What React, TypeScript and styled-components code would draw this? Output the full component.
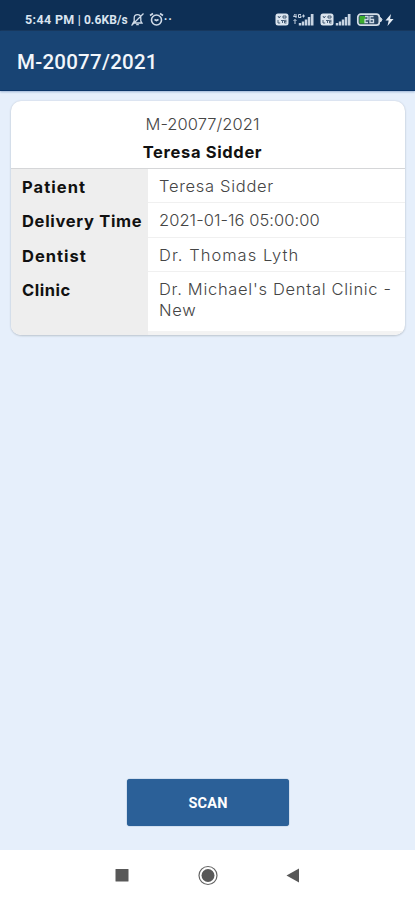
import React from "react";
import styled, { createGlobalStyle } from "styled-components";

const GlobalStyle = createGlobalStyle`
  * { box-sizing: border-box; }
  body { margin: 0; background: #e6effb; }
`;

const Screen = styled.div`
  display: flex;
  flex-direction: column;
  width: 415px;
  height: 900px;
  overflow: hidden;
  background: #e6effb;
  font-family: Inter, sans-serif;
`;

const StatusBar = styled.div`
  display: flex;
  align-items: center;
  height: 31px;
  padding: 8px 20px 0 25px;
  background: #0d2f55;
  color: #d9e4f0;
`;

const StatusText = styled.span<{ $size: number; $track: number }>`
  font: 700 ${(p) => p.$size}px/16px Roboto, sans-serif;
  letter-spacing: ${(p) => p.$track}px;
  white-space: pre;
`;

const StatusIcons = styled.div`
  display: flex;
  align-items: center;
  margin-left: auto;
`;

const AppBar = styled.header`
  display: flex;
  align-items: center;
  height: 60px;
  padding: 2px 17px 0;
  background: #184474;
  border-bottom: 1px solid #0d3669;
  box-shadow: 0 1px 2px #9db5d5;
`;

const Title = styled.h1`
  margin: 0;
  color: #f2f6fb;
  font: 500 20.5px/26px Roboto, sans-serif;
  letter-spacing: 0.25px;
`;

const Content = styled.main`
  display: flex;
  flex: 1;
  flex-direction: column;
  align-items: center;
  justify-content: space-between;
  padding: 10px 10px 24px 11px;
`;

const Card = styled.section`
  width: 394px;
  overflow: hidden;
  border-radius: 10px;
  background: #fff;
  box-shadow: 0 0 2px #c5cedb, 0 1px 2px #bcc5cf;
`;

const CardHeader = styled.div`
  display: flex;
  flex-direction: column;
  align-items: center;
  height: 68px;
  padding: 9px 11px 0 0;
  border-bottom: 1px solid #d5d6d8;
`;

const Text = styled.span<{ $bold?: boolean; $track: number }>`
  display: block;
  color: ${(p) => (p.$bold ? "#111" : "#454545")};
  font-size: 16.5px;
  font-weight: ${(p) => (p.$bold ? 700 : 300)};
  line-height: 28px;
  letter-spacing: ${(p) => p.$track}px;
  white-space: pre;
`;

const Row = styled.div<{ $last?: boolean }>`
  display: grid;
  grid-template-columns: 137px 1fr;
  height: ${(p) => (p.$last ? 63 : 34.33)}px;
`;

const LabelCell = styled.div`
  padding: 4px 0 0 11px;
  background: #eee;
`;

const ValueCell = styled.div<{ $last?: boolean }>`
  padding: ${(p) => (p.$last ? 7 : 3)}px 0 0 11px;
  border-bottom: ${(p) => (p.$last ? "4px solid #f3f3f3" : "1px solid #f0f0f0")};

  ${Text} {
    line-height: ${(p) => (p.$last ? 21 : 28)}px;
  }
`;

const ScanButton = styled.button`
  width: 162px;
  height: 47px;
  padding: 3px 0 0;
  border: 0;
  border-radius: 3px;
  background: #2b6098;
  box-shadow: 0 0 1px #265784;
  color: #fff;
  font: 700 14.5px/20px Roboto, sans-serif;
  letter-spacing: 0.2px;
`;

const NavBar = styled.nav`
  height: 50px;
  background: #fff;

  svg { display: block; }
`;

const MutedBell = () => (
  <svg width="15" height="15" viewBox="0 0 15 15" fill="none" stroke="#d0dbe8" strokeWidth="1.3">
    <path d="M3 11h9l-1.2-2V6A3.3 3.3 0 0 0 4.2 6v3zM6.2 12.7h2.6M1.5 13.5l12-12" />
  </svg>
);

const AlarmClock = () => (
  <svg width="15" height="15" viewBox="0 0 15 15" fill="none" stroke="#d0dbe8" strokeWidth="1.6">
    <circle cx="7.5" cy="8" r="5" />
    <path d="M1 3.5 4 1.5M14 3.5 11 1.5M5.5 7.5l2 1 2-1" />
  </svg>
);

const VolteBadge = () => (
  <svg width="14" height="13" viewBox="0 0 14 13">
    <rect x=".5" y=".5" width="13" height="12" rx="2.5" fill="#dbe5ef" />
    <path d="M3 3l1.2 2L5.5 3M8 3h3v2H8zM3 7v3h2.2M6 7.5h3M7.5 7.5V10M11.5 7.3h-2V10h2M9.5 8.6h2" fill="none" stroke="#38506c" strokeWidth=".9" />
  </svg>
);

const Signal = ({ network }: { network?: boolean }) => (
  <svg width={network ? 22 : 17} height="13" viewBox={network ? "-5 0 22 13" : "0 0 17 13"} fill="#c6d3e2">
    <path d="M.8 10h2.4v2.5H.8zM3.8 8.5h2.4v4H3.8zM6.8 6.5h2.4v6H6.8zM9.8 4h2.4v8.5H9.8zM12.8 1h2.7v11.5h-2.7z" />
    {network && (
      <path d="M-3 1l-1.500 2.500h3M-2 1v4M3 1.500H.5v3H3V3H2M4 3h3M5.500 1.500v3M-3 11V6.500l-1.500 1.500M-3 6.500l1.500 1.500" fill="none" stroke="#c6d3e2" />
    )}
  </svg>
);

const Battery = () => (
  <svg width="39" height="14" viewBox="0 0 39 14">
    <rect x="1.8" y="1.2" width="21.5" height="11" rx="3" fill="#284563" stroke="#d4dee8" strokeWidth="1.7" />
    <rect x="3.5" y="3" width="6" height="7.5" fill="#3bad2e" />
    <path d="M24.5 4.5q3 2 0 4.5z" fill="#d4dee8" stroke="#d4dee8" />
    <path d="M9 3.5h3v3H9v3h3M17.5 3.5H14v6h3.5v-3H14" fill="none" stroke="#cbd8e4" strokeWidth="1.3" />
    <path d="M35 1 29.5 7.5h3.2l-1.2 5.5 6-7h-3.400z" fill="#e6edf4" />
  </svg>
);

const StatusGap = styled.span<{ $w: number }>`
  width: ${(p) => p.$w}px;
`;

const rows = [
  { label: "Patient", labelTrack: 1.05, value: "Teresa Sidder", valueTrack: 0.7 },
  { label: "Delivery Time", labelTrack: 0.7, value: "2021-01-16 05:00:00", valueTrack: 0.05 },
  { label: "Dentist", labelTrack: 0.98, value: "Dr. Thomas Lyth", valueTrack: 1.02 },
  { label: "Clinic", labelTrack: 0.5, value: "Dr. Michael's Dental Clinic -\nNew", valueTrack: 0.7 },
];

export default function App() {
  return (
    <Screen>
      <GlobalStyle />
      <StatusBar>
        <StatusText $size={12.5} $track={0.35}>5:44 PM</StatusText>
        <StatusText $size={12} $track={0.1}> | 0.6KB/s</StatusText>
        <StatusGap $w={2} />
        <MutedBell />
        <StatusGap $w={4} />
        <AlarmClock />
        <StatusText $size={12} $track={1}>··</StatusText>
        <StatusIcons>
          <VolteBadge />
          <StatusGap $w={4} />
          <Signal network />
          <StatusGap $w={5} />
          <VolteBadge />
          <StatusGap $w={1} />
          <Signal />
          <StatusGap $w={4} />
          <Battery />
        </StatusIcons>
      </StatusBar>
      <AppBar>
        <Title>M-20077/2021</Title>
      </AppBar>
      <Content>
        <Card>
          <CardHeader>
            <Text $track={0.05}>M-20077/2021</Text>
            <Text $bold $track={0.65}>Teresa Sidder</Text>
          </CardHeader>
          {rows.map((row, i) => {
            const last = i === rows.length - 1;
            return (
              <Row key={row.label} $last={last}>
                <LabelCell>
                  <Text $bold $track={row.labelTrack}>{row.label}</Text>
                </LabelCell>
                <ValueCell $last={last}>
                  <Text $track={row.valueTrack}>{row.value}</Text>
                </ValueCell>
              </Row>
            );
          })}
        </Card>
        <ScanButton>SCAN</ScanButton>
      </Content>
      <NavBar>
        <svg width="415" height="50" viewBox="0 0 415 50" fill="#585858">
          <rect x="115.5" y="19" width="13" height="12.5" rx=".5" />
          <circle cx="208" cy="25.5" r="9" fill="none" stroke="#646464" strokeWidth="1.2" />
          <circle cx="208" cy="25.5" r="6.5" />
          <path d="M286.5 25.5 299 18.5v14z" />
        </svg>
      </NavBar>
    </Screen>
  );
}
